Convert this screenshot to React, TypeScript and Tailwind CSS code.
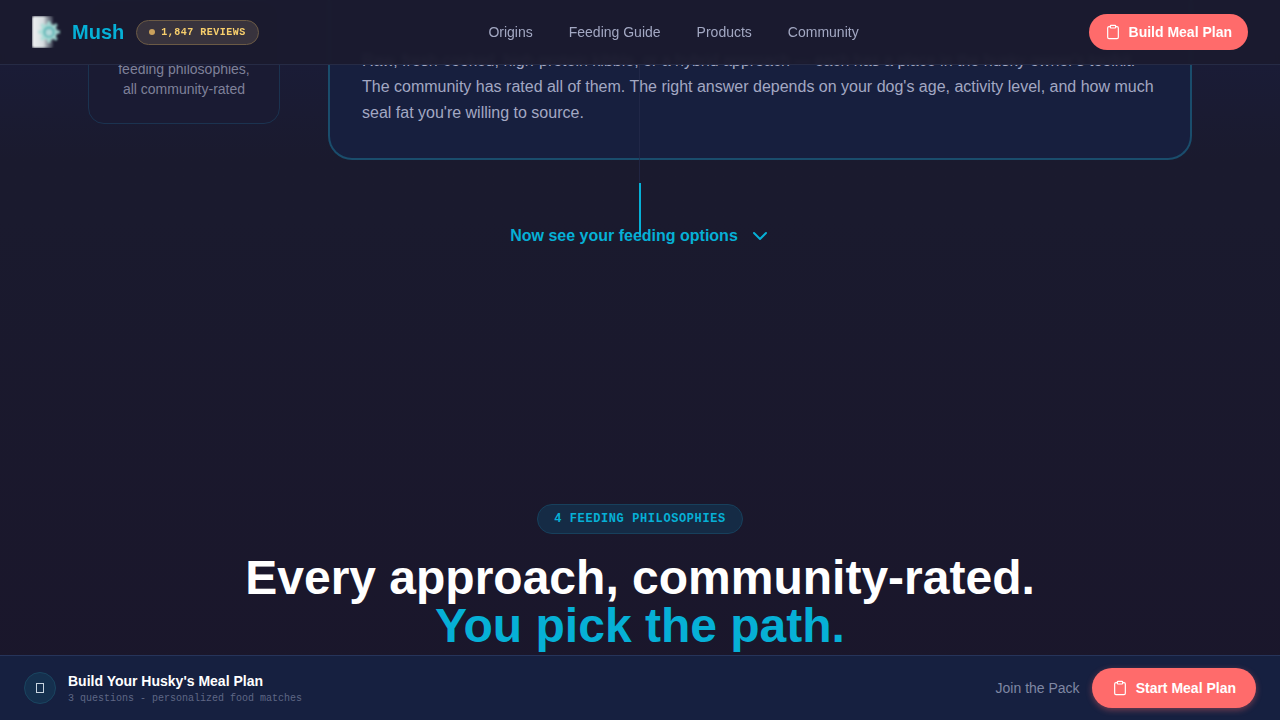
import { ChevronDown, Clipboard } from "lucide-react";

function Logo() {
  return (
    <svg width="32" height="32" viewBox="0 0 32 32" className="shrink-0">
      <defs>
        <linearGradient id="lg" x1="0" x2="1" y1="0" y2="0">
          <stop offset="0" stopColor="#eef0f2" />
          <stop offset="0.55" stopColor="#d5dcdf" />
          <stop offset="1" stopColor="#8f98a4" stopOpacity="0.3" />
        </linearGradient>
        <filter id="bl"><feGaussianBlur stdDeviation="0.8" /></filter>
      </defs>
      <g filter="url(#bl)">
        <rect x="0" y="0" width="21" height="32" rx="2" fill="url(#lg)" />
        <g fill="#a9ded8" fillOpacity="0.85">
          <circle cx="17" cy="16" r="8.5" />
          <rect x="15.4" y="5" width="3.2" height="22" />
          <rect x="6" y="14.4" width="22" height="3.2" />
          <rect x="15.4" y="5" width="3.2" height="22" transform="rotate(45 17 16)" />
          <rect x="15.4" y="5" width="3.2" height="22" transform="rotate(-45 17 16)" />
        </g>
        <circle cx="17" cy="16" r="6" fill="#6dbcbc" />
        <circle cx="17" cy="16.5" r="3.2" fill="#b4d8da" />
      </g>
    </svg>
  );
}

export default function App() {
  return (
    <div className="relative h-[720px] w-[1280px] overflow-hidden bg-[#1a1a2e] font-['Liberation_Sans',sans-serif]">
      <div className="h-[720px] bg-gradient-to-b from-[#1a1a2e] from-[30%] to-[#1a162b]">
        {/* Scrolled story row */}
        <div className="relative h-[160px] bg-gradient-to-b from-[#1a1d3c] to-[#1a1a2e]">
          <div className="flex items-start gap-12 px-[88px]">
            <div className="flex h-[124px] w-[192px] shrink-0 flex-col justify-end rounded-2xl border border-[#1b3350] bg-[#1a1b33] px-6 pb-6 text-center text-sm leading-5 text-[#7f8199]">
              <p>feeding philosophies,</p>
              <p>all community-rated</p>
            </div>
            <div className="flex h-[160px] w-[864px] shrink-0 flex-col justify-end rounded-b-3xl border-x-2 border-b-2 border-[#1a4d6c] bg-[#171f3e] px-8 pb-8 text-base leading-[26px] text-[#a3a8c3]">
              <p className="whitespace-nowrap">Raw, fresh-cooked, high-protein kibble, or a hybrid approach — each has a place in the husky owner's toolkit.</p>
              <p className="whitespace-nowrap">The community has rated all of them. The right answer depends on your dog's age, activity level, and how much</p>
              <p>seal fat you're willing to source.</p>
            </div>
          </div>
        </div>

        {/* Transition prompt */}
        <div className="relative flex h-[344px] justify-center pl-[2px] pt-[64px]">
          <div className="absolute left-[639px] top-[-100px] h-[124px] w-px bg-[#252b4b]/70" />
          <div className="absolute left-[638.5px] top-[23px] h-[52px] w-[2px] bg-[#06b0d6]" />
          <div className="flex h-6 items-center gap-[10px] text-base font-bold text-[#06b0d6]">
            <span>Now see your feeding options</span>
            <ChevronDown size={24} strokeWidth={2} className="text-[#06b0d6]" />
          </div>
        </div>

        {/* Section header */}
        <div className="flex flex-col items-center">
          <div className="flex h-[30px] items-center rounded-full border border-[#17405c] bg-[#152b45] px-4 font-['Liberation_Mono',monospace] text-xs font-bold tracking-[0.6px] text-[#06b0d6]">
            4 FEEDING PHILOSOPHIES
          </div>
          <h2 className="mt-5 text-center text-5xl leading-[48px] font-bold text-white">
            Every approach, community-rated.
            <br />
            <span className="text-[#06b0d6]">You pick the path.</span>
          </h2>
        </div>
      </div>

      {/* Top nav */}
      <nav className="absolute inset-x-0 top-0 flex h-[65px] items-center justify-between border-b border-[#262b45] bg-[#1a1a2e]/95 px-8 backdrop-blur-[2px]">
        <div className="flex items-center gap-2">
          <Logo />
          <span className="text-xl font-bold text-[#06b0d6]">Mush</span>
          <div className="ml-1 flex h-[25px] items-center gap-[6px] rounded-full border border-[#6b5a45] bg-[#38333d] px-3 font-['Liberation_Mono',monospace] text-[10px] font-bold tracking-[0.5px] text-[#f8cf6c]">
            <span className="h-[6px] w-[6px] rounded-full bg-[#c9a05c]" />
            1,847 REVIEWS
          </div>
        </div>
        <div className="absolute left-[488.4px] flex items-center gap-9 text-sm text-[#a3a8c3]">
          <span>Origins</span>
          <span>Feeding Guide</span>
          <span>Products</span>
          <span>Community</span>
        </div>
        <button className="flex h-9 items-center gap-2 rounded-full bg-[#ff6b6b] px-4 text-sm font-bold text-white">
          <Clipboard size={16} strokeWidth={1.75} />
          Build Meal Plan
        </button>
      </nav>

      {/* Bottom sticky bar */}
      <div className="absolute inset-x-0 bottom-0 flex h-[65px] items-center justify-between border-t border-[#26345a] bg-[#162040] px-6">
        <div className="flex items-center gap-3">
          <div className="flex h-8 w-8 items-center justify-center rounded-full border border-[#1a4560] bg-[#15304e]">
            <span className="h-[10px] w-2 border border-[#c8d4e0]" />
          </div>
          <div>
            <p className="text-sm leading-5 font-bold text-white">Build Your Husky's Meal Plan</p>
            <p className="font-['Liberation_Mono',monospace] text-[10px] leading-[15px] text-[#5f6785]">3 questions - personalized food matches</p>
          </div>
        </div>
        <div className="flex items-center gap-3">
          <span className="text-sm text-[#7f87a3]">Join the Pack</span>
          <button className="flex h-10 items-center gap-2 rounded-full bg-[#ff6b6b] px-5 text-sm font-bold text-white shadow-[0_2px_6px_rgba(255,107,107,0.4)]">
            <Clipboard size={16} strokeWidth={1.75} />
            Start Meal Plan
          </button>
        </div>
      </div>
    </div>
  );
}
